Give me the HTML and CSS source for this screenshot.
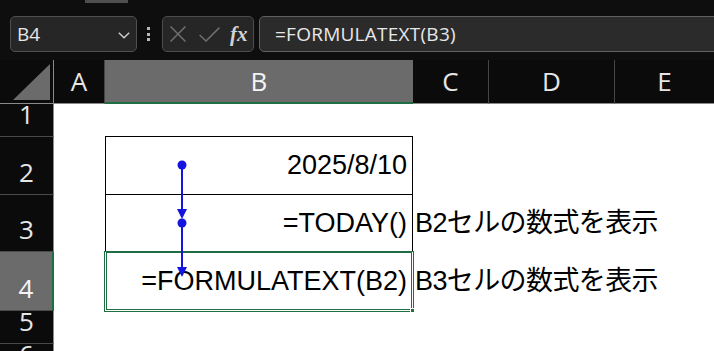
FILE: index.html
```html
<!DOCTYPE html>
<html lang="ja">
<head>
<meta charset="utf-8">
<title>FORMULATEXT</title>
<link rel="stylesheet" href="styles.css">
</head>
<body>
<div class="app">
  <div class="strip"><div class="tab"></div></div>
  <div class="fbar">
    <div class="namebox">
      <span class="ref">B4</span>
      <svg class="chev" width="12" height="7" viewBox="0 0 12 7"><path d="M0.8 0.8 L6 5.8 L11.2 0.8" fill="none" stroke="#d0d0d0" stroke-width="1.4"/></svg>
    </div>
    <div class="vdots"><i></i><i></i><i></i></div>
    <div class="fxbox">
      <svg class="ic-x" width="16" height="16" viewBox="0 0 16 16"><path d="M0.5 0.5 L15.5 15.5 M15.5 0.5 L0.5 15.5" stroke="#6f6f6f" stroke-width="1.5" fill="none"/></svg>
      <svg class="ic-ok" width="21" height="15" viewBox="0 0 21 15"><path d="M0.6 8 L7 14 L20.4 0.6" stroke="#6f6f6f" stroke-width="1.5" fill="none"/></svg>
      <span class="fx">fx</span>
    </div>
    <div class="formula">=FORMULATEXT(B3)</div>
  </div>

  <div class="sheet">
    <div class="corner"><svg width="38" height="37" viewBox="0 0 38 37"><polygon points="0,36 37,36 37,0" fill="#6b6b6b"/></svg></div>
    <div class="ch">A</div>
    <div class="ch sel">B</div>
    <div class="ch">C</div>
    <div class="ch">D</div>
    <div class="ch last">E</div>

    <div class="rh">1</div>
    <div class="c"></div><div class="c b1"></div><div class="c"></div><div class="c"></div><div class="c"></div>

    <div class="rh">2</div>
    <div class="c"></div><div class="c tb val">2025/8/10</div><div class="c"></div><div class="c"></div><div class="c"></div>

    <div class="rh">3</div>
    <div class="c"></div><div class="c tb val">=TODAY()</div><div class="c note">B2セルの数式を表示</div><div class="c"></div><div class="c"></div>

    <div class="rh rsel">4</div>
    <div class="c"></div><div class="c tb val active">=FORMULATEXT(B2)</div><div class="c note">B3セルの数式を表示</div><div class="c"></div><div class="c"></div>

    <div class="rh">5</div>
    <div class="c"></div><div class="c"></div><div class="c"></div><div class="c"></div><div class="c"></div>

    <div class="rh">6</div>
    <div class="c"></div><div class="c"></div><div class="c"></div><div class="c"></div><div class="c"></div>
  </div>

  <svg class="trace" width="714" height="351" viewBox="0 0 714 351">
    <g fill="#1414e0" stroke="#1414e0">
      <line x1="182" y1="165" x2="182" y2="212" stroke-width="2"/>
      <circle cx="182" cy="165" r="4.5" stroke="none"/>
      <polygon points="177,209 187,209 182,219" stroke="none"/>
      <line x1="182" y1="223" x2="182" y2="270" stroke-width="2"/>
      <circle cx="182" cy="223" r="4.5" stroke="none"/>
      <polygon points="177,267 187,267 182,277" stroke="none"/>
    </g>
  </svg>
</div>
</body>
</html>
```

FILE: styles.css
```css
html, body {
  margin: 0;
  padding: 0;
  background: #0e0e0e;
  overflow: hidden;
}

.app {
  position: relative;
  width: 714px;
  height: 351px;
  overflow: hidden;
  font-family: "Open Sans", "Noto Sans", sans-serif;
  color: #e4e4e4;
}

.strip {
  height: 3px;
  padding-left: 85px;
}

.tab {
  width: 43px;
  height: 3px;
  background: #4f4f4f;
}

.fbar {
  display: flex;
  align-items: center;
  height: 36px;
  margin-top: 13px;
  padding-left: 10px;
}

.namebox {
  box-sizing: border-box;
  width: 127px;
  height: 36px;
  display: flex;
  align-items: center;
  justify-content: space-between;
  padding: 0 6px 0 6px;
  background: #262626;
  border: 1px solid #505050;
  border-radius: 5px;
}

.ref {
  font-size: 19px;
  line-height: 1;
  color: #e6e6e6;
}

.chev {
  display: block;
  margin-top: 2px;
}

.vdots {
  display: flex;
  flex-direction: column;
  gap: 2.5px;
  margin-left: 10px;
  width: 4px;
}

.vdots i {
  display: block;
  width: 3px;
  height: 3px;
  background: #b8b8b8;
}

.fxbox {
  box-sizing: border-box;
  width: 92px;
  height: 36px;
  margin-left: 11px;
  display: flex;
  align-items: center;
  padding-left: 7px;
  background: #262626;
  border: 1px solid #4c4c4c;
  border-radius: 5px;
}

.ic-x {
  display: block;
}

.ic-ok {
  display: block;
  margin-left: 13px;
}

.fx {
  margin-left: 10px;
  font-family: "Liberation Serif", "DejaVu Serif", serif;
  font-style: italic;
  font-weight: bold;
  font-size: 21px;
  line-height: 1;
  color: #d2d2d2;
}

.formula {
  box-sizing: border-box;
  flex: 1;
  height: 36px;
  margin-left: 5px;
  margin-right: -8px;
  display: flex;
  align-items: center;
  padding-left: 15px;
  background: #2b2b2b;
  border: 1px solid #606060;
  border-radius: 5px 0 0 5px;
  font-size: 19px;
  letter-spacing: 0.25px;
  color: #e8e8e8;
  white-space: nowrap;
}

.sheet {
  margin-top: 8px;
  display: grid;
  grid-template-columns: 54px 51px 308px 76px 126px 1fr;
  grid-template-rows: 44px 33px 58px 57px 59px 33px 33px;
  background: #ffffff;
}

.corner,
.ch,
.rh {
  box-sizing: border-box;
  background: #0b0b0b;
  font-size: 26px;
  line-height: 1;
  color: #e6e6e6;
  display: flex;
  justify-content: center;
  align-items: flex-end;
}

.corner {
  border-right: 1px solid #8a8a8a;
  border-bottom: 1px solid #8a8a8a;
  align-items: flex-start;
  justify-content: flex-start;
  padding: 4px 0 0 13px;
}

.corner svg {
  display: block;
}

.ch {
  padding-bottom: 9px;
  border-bottom: 1px solid #8a8a8a;
  border-right: 1px solid #454545;
}

.ch.sel {
  background: #6b6b6b;
  border-right: none;
  border-bottom: 2px solid #1f6e43;
  padding-bottom: 8px;
  color: #f4f4f4;
}

.ch.last {
  border-right: none;
}

.rh {
  padding-bottom: 9px;
  border-right: 1px solid #8a8a8a;
  border-bottom: 1px solid #4a4a4a;
}

.rh.rsel {
  background: #6b6b6b;
  border-right: 2px solid #1f6e43;
  color: #f4f4f4;
}

.c {
  box-sizing: border-box;
  position: relative;
  min-width: 0;
}

.b1 {
  border-bottom: 1px solid #000;
}

.tb {
  border-left: 1px solid #000;
  border-right: 1px solid #000;
  border-bottom: 1px solid #000;
}

.val {
  display: flex;
  align-items: center;
  justify-content: flex-end;
  padding-right: 5px;
  font-family: "Liberation Sans", Arial, sans-serif;
  font-size: 27px;
  line-height: 1;
  color: #000;
  white-space: nowrap;
}

.note {
  display: flex;
  align-items: center;
  padding-left: 2px;
  font-family: "Liberation Sans", "Noto Sans CJK JP", sans-serif;
  font-size: 27px;
  letter-spacing: -0.6px;
  line-height: 1;
  color: #000;
  white-space: nowrap;
  z-index: 1;
}

.active {
  border-color: transparent;
  box-shadow: 0 0 0 1px #1f6e43, inset 0 0 0 1px #1f6e43;
  z-index: 2;
}

.active::after {
  content: "";
  position: absolute;
  right: -3px;
  bottom: -3px;
  width: 5px;
  height: 5px;
  background: #1f6e43;
  border: 1px solid #ffffff;
  box-sizing: border-box;
}

.trace {
  position: absolute;
  left: 0;
  top: 0;
  pointer-events: none;
  z-index: 5;
}
```
